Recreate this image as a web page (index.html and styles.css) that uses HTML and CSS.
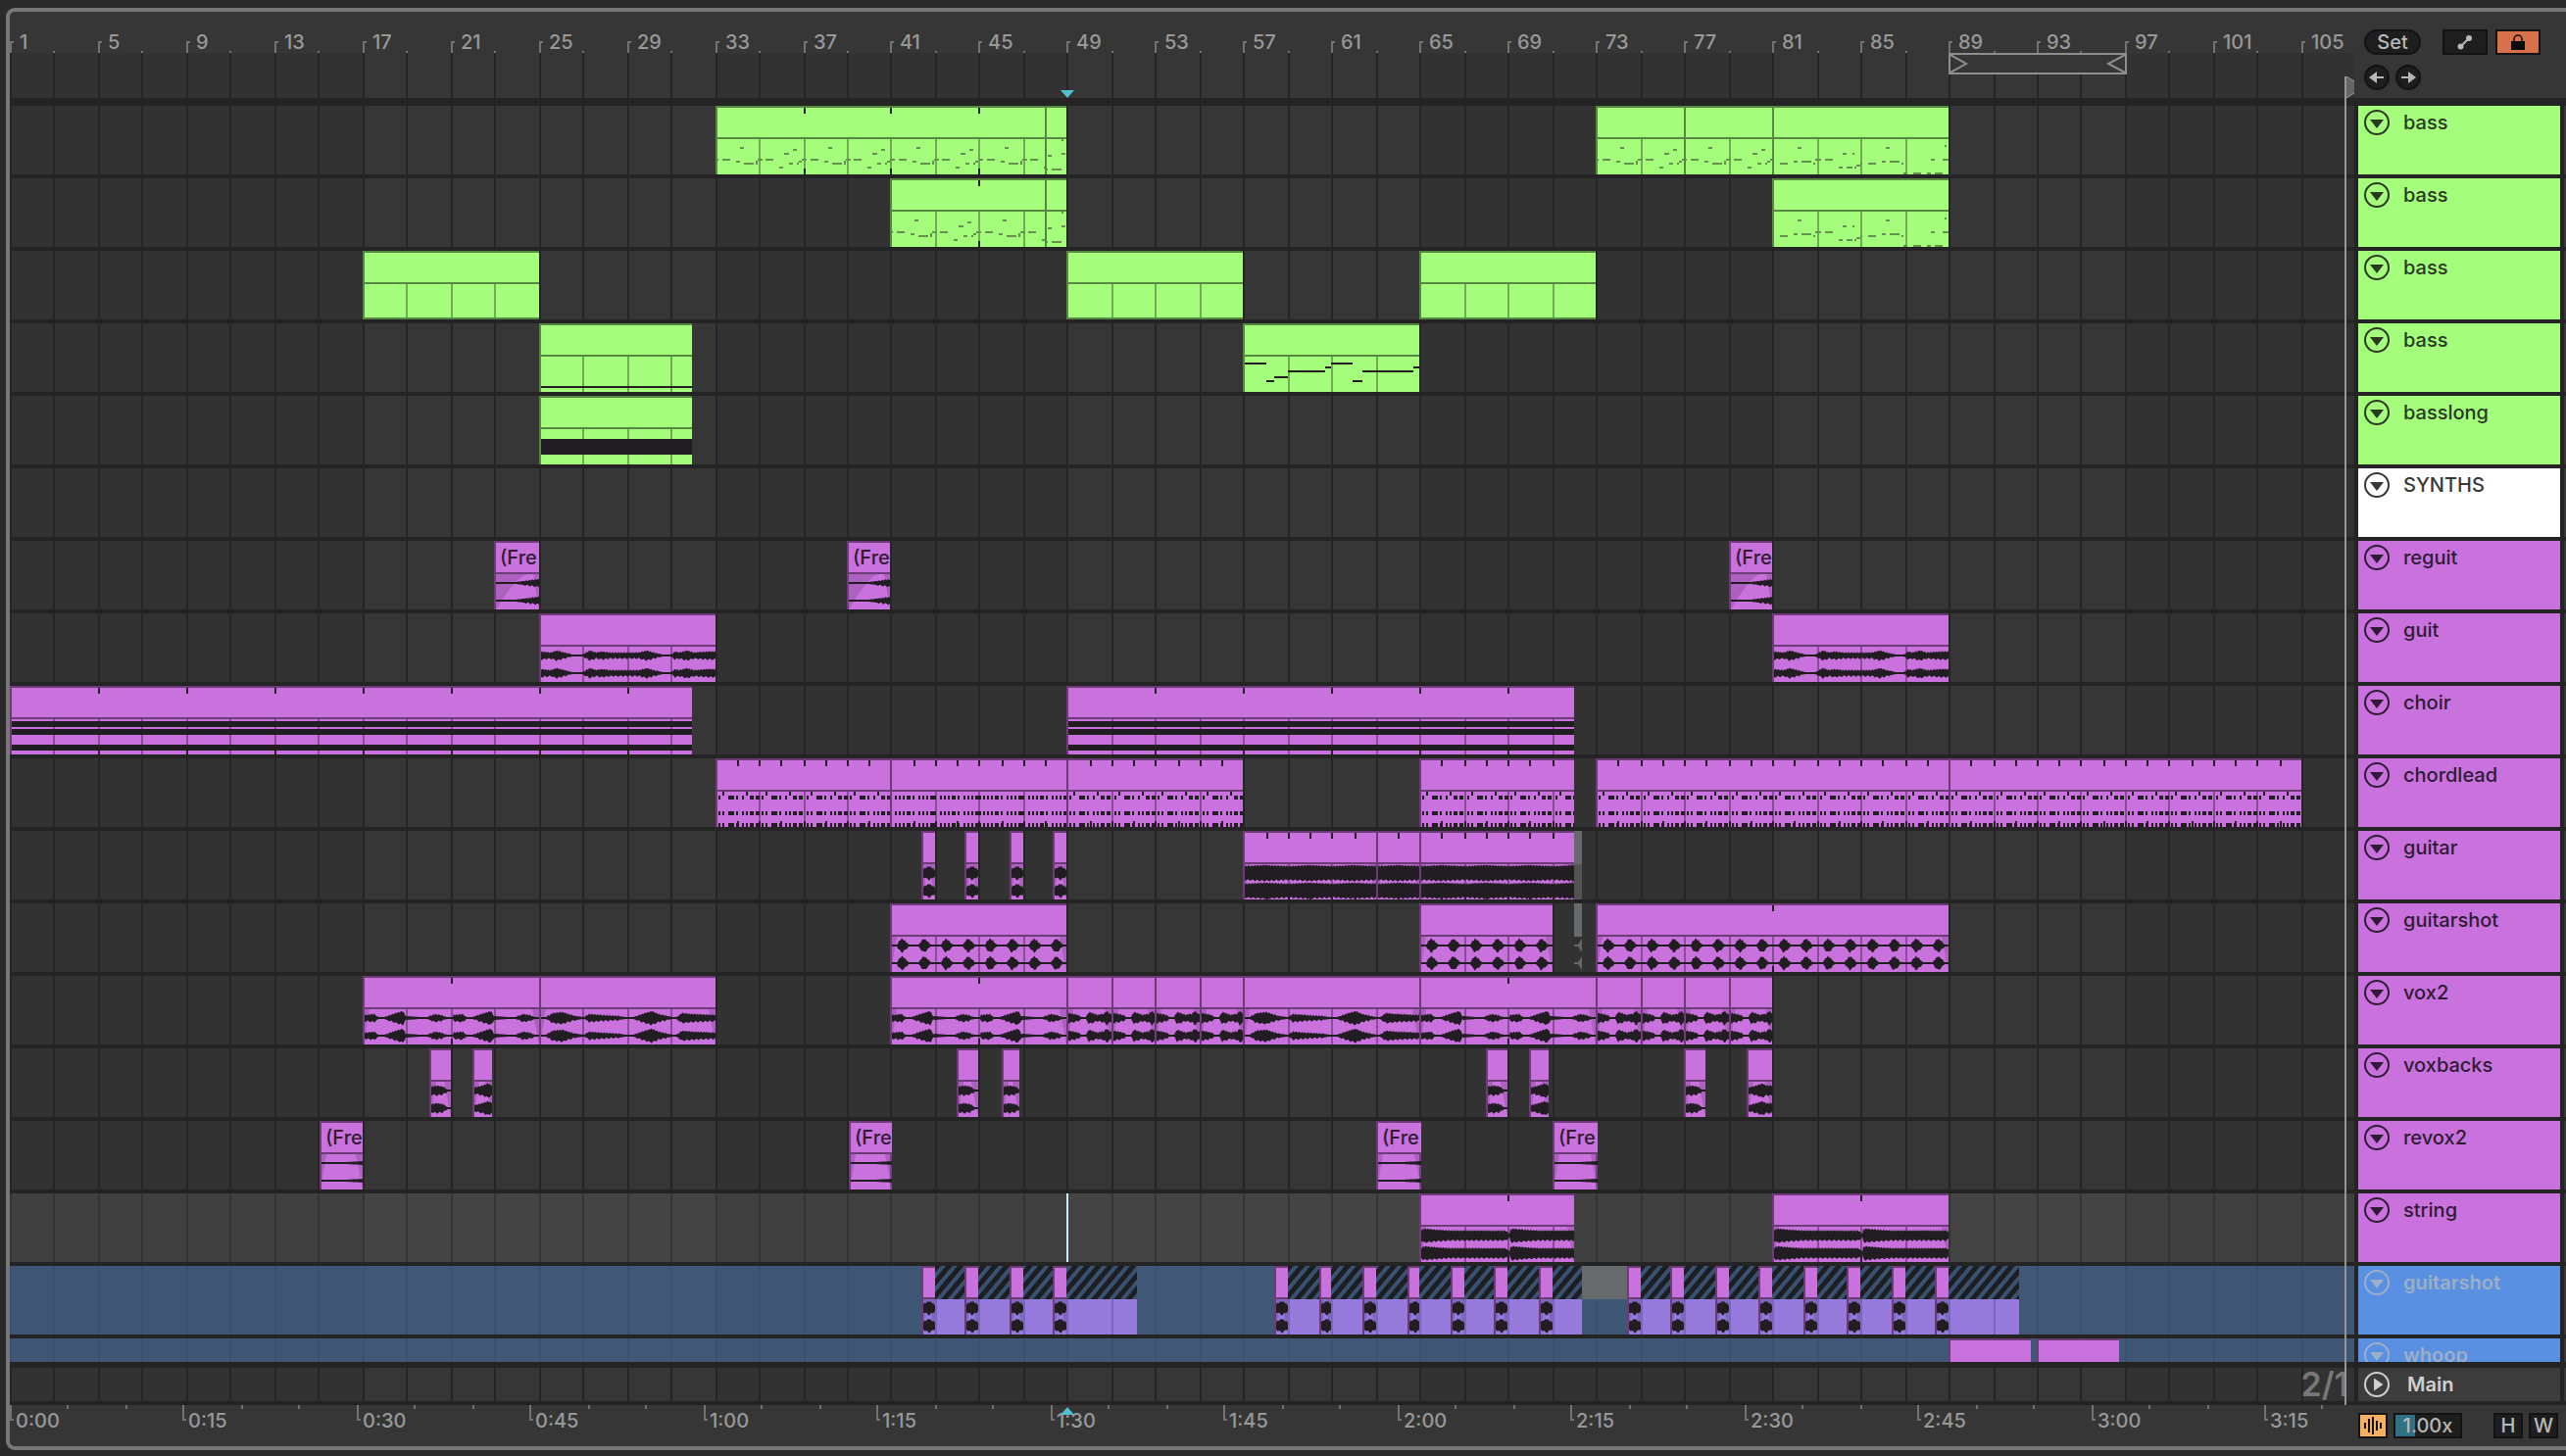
FILE: index.html
```html
<!DOCTYPE html>
<html lang="en">
<head>
    <meta charset="UTF-8">
    <meta name="viewport" content="width=device-width, initial-scale=1.0">
    <title>Arrangement</title>
    <link rel="stylesheet" href="styles.css">
</head>
<body>
    <main class="arrangement">
        <svg class="grid" id="grid"></svg>

        <header class="row top">
            <div class="timeline ruler">
                <div class="bar-labels" id="bars"></div>
                <div class="scrub" id="scrub"></div>
            </div>
            <div class="tools">
                <div class="tool-line">
                    <button class="pill">Set</button>
                    <button class="box wide" aria-label="Automation mode">
                        <svg width="16" height="16" viewBox="0 0 16 16"><path d="M3 13L13 3" stroke="#b8b8b8" stroke-width="2"/><circle cx="3.500" cy="12.500" r="3" fill="#b8b8b8"/><circle cx="12" cy="4" r="3" fill="#b8b8b8"/></svg>
                    </button>
                    <button class="box wide lock" aria-label="Lock envelopes">
                        <svg width="16" height="16" viewBox="0 0 16 16"><path d="M4 8V5a4 4 0 0 1 8 0v3" fill="none" stroke="#0c0c0c" stroke-width="1.500"/><path d="M1 7h14v9H1z" fill="#0c0c0c"/></svg>
                    </button>
                </div>
                <div class="tool-line arrows">
                    <button class="round" aria-label="Previous locator">
                        <svg width="16" height="14" viewBox="0 0 16 14"><path d="M0 7l8-6v5h7v2H8v5z" fill="#b8b8b8"/></svg>
                    </button>
                    <button class="round" aria-label="Next locator">
                        <svg width="16" height="14" viewBox="0 0 16 14"><path d="M16 7L8 1v5H1v2h7v5z" fill="#b8b8b8"/></svg>
                    </button>
                </div>
            </div>
        </header>

        <div class="divider"></div>
        <section class="tracks" id="tracks"></section>

        <div class="row main-row">
            <div class="timeline"><span class="zoom">2/1</span></div>
            <div class="track-head main-head">
                <button class="fold" aria-label="Unfold Main">
                    <svg width="26" height="26" viewBox="0 0 26 26"><circle cx="13" cy="13" r="12" fill="none" stroke="currentColor" stroke-width="2"/><path d="M10 6.500v13l9.500-6.500z" fill="currentColor"/></svg>
                </button>
                <span>Main</span>
            </div>
            <div class="edge"></div>
        </div>

        <footer class="row bottom">
            <div class="timeline" id="times"></div>
            <div class="status">
                <button class="box small wave" aria-label="Waveform zoom">
                    <svg width="20" height="18" viewBox="0 0 20 18"><path d="M2 6v6M6 2v14M10 0v18M14 4v10M18 6v6" stroke="#111" stroke-width="2"/></svg>
                </button>
                <input class="speed" type="text" value="1.00x" aria-label="Zoom factor">
                <button class="box small height">H</button>
                <button class="box small">W</button>
            </div>
        </footer>

        <div class="overlay" id="overlay"></div>
    </main>
    <script src="script.js"></script>
</body>
</html>
```
FILE: styles.css
```css
* {
    box-sizing: border-box;
}
body {
    margin: 0;
    height: 100vh;
    padding: 8px 0 6px 6px;
    background: #2a2a2a;
    font-family: Inter, "Liberation Sans", sans-serif;
    font-size: 20px;
    font-weight: 500;
    line-height: 26px;
    color: #989898;
    overflow: hidden;
}
button, input {
    font: inherit;
    padding: 0;
}
svg {
    display: block;
}
.arrangement {
    position: relative;
    height: 100%;
    display: flex;
    flex-direction: column;
    border: 4px solid #777;
    border-right: 0;
    border-radius: 9px 0 0 9px;
    background: #363636;
    overflow: hidden;
}
.row {
    display: flex;
    flex: none;
    position: relative;
}
.timeline {
    flex: 1;
    min-width: 0;
    position: relative;
}
.grid {
    position: absolute;
    left: 0;
    top: 42px;
    width: calc(100% - 216px);
    height: calc(100% - 84px);
}
.shade {
    fill: #323232;
}
.gridline {
    fill: #252525;
}

/* top ruler */
.top {
    height: 88px;
}
.ruler {
    display: flex;
    flex-direction: column;
}
.bar-labels {
    height: 42px;
    position: relative;
    overflow: hidden;
}
.scrub {
    flex: 1;
    position: relative;
}
.label {
    position: absolute;
    bottom: 0;
    height: 12px;
    padding-left: 8px;
    border-left: 2px solid #727272;
    line-height: 2px;
}
.label::before {
    content: "";
    position: absolute;
    left: 0;
    top: 0;
    width: 2px;
    height: 2px;
    background: #727272;
}
.tick {
    position: absolute;
    bottom: 0;
    width: 2px;
    height: 2px;
    background: #727272;
}
.loop {
    position: absolute;
    top: 0;
    height: 22px;
    border: 2px solid #8e8e8e;
    background: #363636;
    display: flex;
    justify-content: space-between;
}
.tools {
    width: 216px;
    padding: 18px 0 0 10px;
}
.tool-line {
    display: flex;
    gap: 8px;
}
.arrows {
    margin-top: 10px;
    gap: 6px;
}
.pill, .round, .box, .speed {
    height: 26px;
    border: 2px solid #131313;
    background: #1e1e1e;
    color: #b8b8b8;
    display: flex;
    align-items: center;
    justify-content: center;
    line-height: 22px;
}
.pill {
    width: 58px;
    border-radius: 13px;
    margin-right: 14px;
}
.round {
    width: 26px;
    border-radius: 50%;
}
.wide {
    width: 46px;
}
.lock {
    background: #d8714b;
}
.divider {
    flex: none;
    height: 8px;
    background: #242424;
    position: relative;
}

/* tracks */
.tracks {
    flex: 1;
    min-height: 0;
    overflow: hidden;
    position: relative;
}
.track {
    height: 74px;
    border-bottom: 4px solid #242424;
}
.track-head {
    width: 214px;
    display: flex;
    align-items: flex-start;
    gap: 14px;
    padding: 4px 6px;
    border: solid #242424;
    border-width: 0 4px;
    color: #2a3a22;
    line-height: 27px;
}
.edge {
    width: 2px;
    background: #363636;
}
.fold {
    width: 26px;
    height: 26px;
    border: 0;
    background: none;
    color: inherit;
}
.green .track-head {
    background: #a5fd7c;
}
.white .track-head {
    background: #fff;
    color: #383838;
}
.pink .track-head {
    background: #c972de;
    color: #2f1b36;
}
.blue .track-head {
    background: #5990e2;
    color: #9caec8;
    font-weight: 600;
}
.selected .timeline {
    background: rgba(255, 255, 255, 0.07);
}
.blue .timeline {
    background: rgba(70, 106, 155, 0.64);
}

/* clips */
.clip {
    position: absolute;
    top: 0;
    bottom: 0;
    overflow: hidden;
}
.clip svg {
    width: 100%;
    height: 70px;
}
.clip-name {
    position: absolute;
    left: 6px;
    top: 4px;
    color: #2f1b36;
}
.face {
    fill: #c972de;
}
.line {
    fill: #6d3c78;
}
.green .face {
    fill: #a5fd7c;
}
.green .line {
    fill: #578842;
}
.blue .body {
    fill: #967bdc;
}
.inner {
    fill: #000;
    opacity: 0.32;
}
.ink {
    fill: #221d23;
}
.note {
    fill: #659150;
}
.fade {
    fill: #000;
    opacity: 0.15;
}
.hatch {
    position: absolute;
    top: 0;
    bottom: 0;
    background: #967bdc;
}
.hatch::before {
    content: "";
    display: block;
    height: 34px;
    background: repeating-linear-gradient(130deg, #1c1e21 0, #1c1e21 4px, #3a5271 5px, #3a5271 8px, #1c1e21 9px);
}
.hatch-line {
    position: absolute;
    top: 34px;
    bottom: 0;
    width: 2px;
    background: #7867bc;
}
.stub {
    position: absolute;
    top: 0;
    height: 34px;
    background: #666a6d;
}
.stub-tail {
    position: absolute;
    top: 34px;
    bottom: 0;
    background: #535353;
}
.stub-tail.shot {
    background: none;
}
.stub-tail path {
    fill: #666;
}

/* main track and time ruler */
.main-row {
    height: 44px;
    border: solid #242424;
    border-width: 6px 0 4px;
}
.main-head {
    background: #3c3c3c;
    color: #d0d0d0;
    font-weight: 600;
    gap: 18px;
}
.zoom {
    position: absolute;
    right: 6px;
    top: 0;
    font-size: 34px;
    font-weight: 600;
    line-height: 34px;
    color: #777;
}
.bottom {
    height: 42px;
}
.time {
    position: absolute;
    top: 0;
    height: 16px;
    padding-left: 4px;
    border-left: 2px solid #727272;
    line-height: 32px;
}
.time::before {
    content: "";
    position: absolute;
    left: 0;
    bottom: 0;
    width: 2px;
    height: 2px;
    background: #727272;
}
.time-tick {
    position: absolute;
    top: 0;
    width: 2px;
    height: 4px;
    background: #727272;
}
.status {
    width: 216px;
    padding: 8px 8px 0 4px;
    display: flex;
    gap: 6px;
}
.small {
    width: 30px;
}
.wave {
    background: #f7b062;
}
.speed {
    width: 70px;
    text-align: center;
    background: linear-gradient(90deg, #2f7183 20px, #1e1e1e 20px);
}
.height {
    margin-left: auto;
}

/* markers over the timeline */
.overlay {
    position: absolute;
    inset: 0 216px 0 0;
    pointer-events: none;
}
.song-end {
    position: absolute;
    top: 66px;
    bottom: 42px;
    width: 10px;
    border-left: 2px solid #959595;
}
.insert-top, .insert-bottom {
    position: absolute;
    width: 14px;
    height: 8px;
    background: #55bdd3;
}
.insert-top {
    top: 80px;
    clip-path: polygon(0 0, 100% 0, 50% 100%);
}
.insert-bottom {
    bottom: 32px;
    clip-path: polygon(50% 0, 100% 100%, 0 100%);
}
.caret {
    position: absolute;
    top: 0;
    bottom: 0;
    width: 2px;
    background: #c4eef2;
}
```
FILE: script.js
```js
const BARS = 106.4;      // bars that fit in the view
const SECONDS = 202.8;   // the same span in seconds
const BODY = 34;         // top of the clip content

// notes: [x, y, width, height]
const riff = [[0,54,3],[7,54,8],[25,42,4],[21,56,4],[29,58,10],[41,56,2,4],[43,54,5],[51,54,8],[70,48,5],
    [79,44,4],[65,62,4],[75,58,4],[83,58,2],[85,56,3],[88,54,2]];
const riffLow = [[0,58,2],[8,58,8],[26,42,4],[22,56,4],[30,56,10],[42,58,2],[44,54,6],[54,54,8],[72,48,4],[82,48,2],
    [68,62,4],[76,62,6],[84,62,2],[86,60,4],[90,58,2],[98,58,8],[116,42,4],[112,56,4],[120,56,10],[132,58,2],
    [134,68,4],[144,68,8],[158,68,4],[166,68,8],[162,54,4],[174,54,6],[176,40,2]];
const riffEnd = [[0,64,3],[7,64,10],[3,50,4],[17,48,4],[17,34,2]];
const melody = [[2,40,22],[24,58,8],[32,54,14],[46,48,38],[84,44,6],[90,40,22],[112,58,10],[122,48,52],[174,44,6]];
const stabs = [3,2, 7,2, 13,6, 21,2, 27,2, 31,2, 35,4, 41,4];
const stabs2 = [5,2, 9,2, 13,2, 17,4, 23,2, 29,2, 33,2, 37,2, 41,6];

// amplitude envelopes: period in px, then [x, amplitude] points
const env = {
    guit: [180, [0,4],[10,3],[16,5],[24,3],[32,1],[42,1],[46,3],[50,5],[56,3],[62,4],[70,3],[90,3],[100,3],[108,5],[115,3],[124,1],[132,1],[137,4],[141,3],[149,5],[156,3],[170,4],[180,4]],
    shot: [22.48, [0,1],[5,1],[7,4],[10,7],[13,5],[17,1],[22.48,1]],
    voxA: [90, [0,3],[10,4],[14,1],[20,1],[32,5],[39,7],[42,2],[57,1],[64,1],[72,4],[78,3],[84,1],[90,1]],
    voxB: [180, [0,1],[5,1],[12,5],[22,6],[28,4],[35,2],[44,1],[49,4],[62,3],[80,2],[86,1],[94,1],[106,5],[113,7],[120,4],[134,1],[138,1],[144,5],[155,4],[180,3]],
    voxC: [45, [0,5],[6,4],[10,3],[13,1],[18,1],[21,6],[30,3],[33,4],[36,4],[39,7],[43,4],[45,3]],
    string: [90, [0,5],[3,7],[14,6],[30,5],[86,5],[90,2]],
    blob: [60, [0,4],[6,7],[14,2],[60,2]],
    back: [60, [0,4],[6,5],[12,4],[17,1],[60,1]],
    back2: [60, [0,3],[8,5],[14,7],[18,5],[60,5]],
    rev: [60, [0,1],[20,1],[36,3],[45,4],[60,4]],
    thin: [60, [0,1],[24,1],[45,2],[60,2]],
    full: [45, [0,7],[20,8],[45,7]]
};

// clips: [start bar, end bar, content, tick spacing in bars]
const small = n => Array.from({length: n}, (_, i) => i * 2);
const tracks = [
    {name: 'bass', color: 'green', clips: [[33,48,'riff',4],[48,49,'riffEnd'],[73,77,'riff'],[77,81,'riff'],[81,89,'riffLow']]},
    {name: 'bass', color: 'green', clips: [[41,48,'riff',4],[48,49,'riffEnd'],[81,89,'riffLow']]},
    {name: 'bass', color: 'green', clips: [[17,25,'empty'],[49,57,'empty'],[65,73,'empty']]},
    {name: 'bass', color: 'green', clips: [[25,32,'pedal'],[57,65,'melody']]},
    {name: 'basslong', color: 'green', clips: [[25,32,'block']]},
    {name: 'SYNTHS', color: 'white', clips: []},
    {name: 'reguit', color: 'pink', clips: [[23,25,'rev'],[39,41,'rev'],[79,81,'rev']]},
    {name: 'guit', color: 'pink', clips: [[25,33,'guit'],[81,89,'guit']]},
    {name: 'choir', color: 'pink', clips: [[1,32,'choir',4],[49,72,'choir',4]]},
    {name: 'chordlead', color: 'pink', clips: [[33,41,'stabs',1],[41,49,'stabs2',1],[49,57,'stabs',1],[65,72,'stabs',1],[73,89,'stabs',1],[89,105,'stabs',1]]},
    {name: 'guitar', color: 'pink', stubs: [[72,72.4]], clips: [...small(4).map(i => [42.35 + i, 43 + i, 'blob']), [57,63,'full',1],[63,65,'full',1],[65,72,'full',1]]},
    {name: 'guitarshot', color: 'pink', stubs: [[72,72.4]], clips: [[41,49,'shot'],[65,71,'shot'],[73,89,'shot',8]]},
    {name: 'vox2', color: 'pink', clips: [[17,25,'voxA',4],[25,33,'voxB'],[41,49,'voxA',4],[49,51,'voxC'],[51,53,'voxC'],[53,55,'voxC'],[55,57,'voxC'],
        [57,65,'voxB'],[65,73,'voxA',4],[73,75,'voxC'],[75,77,'voxC'],[77,79,'voxC'],[79,81,'voxC']]},
    {name: 'voxbacks', color: 'pink', clips: [[20.05,21,'back'],[22,22.9,'back2'],[44,45,'back'],[46.05,46.8,'back'],[68,69,'back'],[70,70.85,'back2'],[77,78,'back'],[79.85,81,'back2']]},
    {name: 'revox2', color: 'pink', clips: [[15.1,17,'thin'],[39.1,41.05,'thin'],[63,65.05,'thin'],[71,73.05,'thin']]},
    {name: 'string', color: 'pink', selected: true, clips: [[65,72,'string',4],[81,89,'string',4]]},
    {name: 'guitarshot', color: 'blue',
        hatches: [[43,52.2],[59,72.35],[75,92.2]],
        stubs: [[72.35,74.4]],
        clips: [...small(4).map(i => [42.35 + i, 43 + i, 'blob']), ...small(7).map(i => [58.4 + i, 59 + i, 'blob']), ...small(8).map(i => [74.4 + i, 75 + i, 'blob'])]},
    {name: 'whoop', color: 'blue', clips: [[89,92.7,'none'],[93,96.7,'none']]}
];

let unit = 22.48;
const x = bar => 2 * Math.floor(0.35 + (bar - 1) * unit / 2);
const rect = (cls, left, top, w, h) => `<rect class="${cls}" x="${left}" y="${top}" width="${w}" height="${h}"/>`;
const place = (left, right) => `style="left:${left}px;width:${right - left}px"`;

function amplitude(name, px) {
    const [period, ...points] = env[name];
    const t = px % period;
    const i = Math.max(1, points.findIndex(p => p[0] >= t));
    const [x0, a0] = points[i - 1];
    const [x1, a1] = points[i];
    return a0 + (a1 - a0) * (t - x0) / (x1 - x0);
}

function waveform(name, width) {
    const scale = unit / 22.48;
    let out = '';
    for (const mid of [43, 61]) {
        let upper = '', lower = '';
        for (let px = 0; px <= width; px += 1) {
            const a = amplitude(name, px / scale);
            const jitter = a > 2 ? Math.sin(px * 2.1 + mid) * 0.8 : 0;
            const low = a > 2 ? Math.cos(px * 1.3 + mid) * 0.8 : 0;
            upper += `L${px + 2} ${(mid - a - jitter).toFixed(1)}`;
            lower = `L${px + 2} ${(mid + a + low).toFixed(1)}` + lower;
        }
        out += `<path class="ink" d="M2 ${mid}${upper}${lower}Z"/>`;
    }
    return out;
}

function content(kind, start, end) {
    const left = x(start), w = x(end) - left;
    const scale = unit / 22.48;
    const notes = (list, cls, period) => {
        let out = '';
        for (let p = 0; p < w; p += period * scale)
            for (const n of list) out += rect(cls, Math.round(p + n[0] * scale), n[1], n[2], n[3] || 2);
        return out;
    };
    if (kind === 'riff') return notes(riff, 'note', 89.92);
    if (kind === 'riffLow') return notes(riffLow, 'note', 999);
    if (kind === 'riffEnd') return notes(riffEnd, 'note', 999);
    if (kind === 'melody') return notes(melody, 'ink', 999);
    if (kind === 'empty') return rect('line', 0, 68, w, 2);
    if (kind === 'pedal') return rect('ink', 2, 64, w, 2);
    if (kind === 'block') return rect('ink', 2, 44, w, 16);
    if (kind === 'choir') return [36, 44, 60].map(y => rect('ink', 2, y, w, 6)).join('');
    if (kind.startsWith('stabs')) {
        const list = kind === 'stabs' ? stabs : stabs2;
        let out = '';
        for (let bar = start; bar < end; bar += 2) {
            const p = x(bar) - left;
            for (let i = 0; i < list.length; i += 2) {
                const high = kind === 'stabs' && (i === 2 || i === 10);
                out += rect('ink', p + list[i], high ? 34 : 38, list[i + 1], 4);
                out += rect('ink', p + list[i], 54, list[i + 1], 4) + rect('ink', p + list[i], 66, list[i + 1], 4);
            }
        }
        return out;
    }
    if (!env[kind]) return '';
    let fades = '';
    if (kind === 'rev') fades = `<path class="fade" d="M2 34H${w - 12}Q${w / 2} 36 2 70ZM${w} 34H${w - 6}L${w} 70Z"/>`;
    else if (kind !== 'guit') fades = `<path class="fade" d="M2 34h5L2 64zM${w} 34h-7L${w} 70z"/>`;
    return fades + waveform(kind, w);
}

function drawClip([start, end, kind, step]) {
    const left = x(start), w = x(end) - left;
    let svg = rect('face', 0, 0, w, BODY) + rect('face body', 0, BODY, w, 36);
    for (let bar = Math.ceil(start); bar < end; bar++)
        if (bar % 2 === 1 && bar > start) svg += rect('inner', x(bar) - left, BODY, 2, 36);
    svg += content(kind, start, end);
    if (step)
        for (let bar = start + step; bar < end; bar += step)
            svg += rect('ink', x(bar) - left, 2, 2, 6) + rect('ink', x(bar) - left, 64, 2, 6);
    svg += rect('line', 0, 0, w, 2) + rect('line', 0, 32, w, 2) + rect('line', 0, 0, 2, 70);
    const name = kind === 'rev' || kind === 'thin' ? '<span class="clip-name">(Fre</span>' : '';
    return `<div class="clip" ${place(left, left + w)}><svg>${svg}</svg>${name}</div>`;
}

function drawHatch([start, end]) {
    const left = x(start);
    let lines = '';
    for (let bar = start; bar < end; bar += 2)
        lines += `<i class="hatch-line" style="left:${x(bar) - left}px"></i>`;
    return `<div class="hatch" ${place(left, x(end))}>${lines}</div>`;
}

function drawStub([start, end], track) {
    const pos = place(x(start), x(end));
    let tail = '';
    if (track.name === 'guitar') tail = `<div class="stub-tail" ${pos}></div>`;
    else if (track.color === 'pink') tail = `<div class="stub-tail shot" ${pos}><svg width="8" height="36"><path d="M0 8h4l4-6v14l-4-6H0zM0 26h4l4-6v14l-4-6H0z"/></svg></div>`;
    return `<div class="stub" ${pos}></div>${tail}`;
}

function drawTrack(track) {
    const lane = (track.hatches || []).map(drawHatch).join('')
        + (track.stubs || []).map(s => drawStub(s, track)).join('')
        + track.clips.map(drawClip).join('')
        + (track.selected ? `<div class="caret" style="left:${x(49)}px"></div>` : '');
    return `<div class="row track ${track.color}${track.selected ? ' selected' : ''}">
        <div class="timeline">${lane}</div>
        <div class="track-head">
            <button class="fold" aria-label="Fold ${track.name}"><svg width="26" height="26" viewBox="0 0 26 26"><circle cx="13" cy="13" r="12" fill="none" stroke="currentColor" stroke-width="2"/><path d="M6 10h14l-7 9z" fill="currentColor"/></svg></button>
            <span>${track.name}</span>
        </div>
        <div class="edge"></div>
    </div>`;
}

function render() {
    const width = document.getElementById('times').clientWidth;
    unit = width / BARS;

    let grid = '', labels = '', times = '';
    for (let bar = 1; bar < BARS; bar += 32) grid += rect('shade', x(bar), 0, Math.min(x(bar + 16), width) - x(bar), '100%');
    for (let bar = 1; bar < BARS; bar += 2) {
        grid += rect('gridline', x(bar), 0, 2, '100%');
        labels += bar % 4 === 1
            ? `<span class="label" style="left:${x(bar)}px">${bar}</span>`
            : `<i class="tick" style="left:${x(bar)}px"></i>`;
    }
    for (let s = 0; s < SECONDS; s += 5) {
        const left = 2 * Math.round(s * width / SECONDS / 2);
        times += s % 15 === 0
            ? `<span class="time" style="left:${left}px">${Math.floor(s / 60)}:${String(s % 60).padStart(2, '0')}</span>`
            : `<i class="time-tick" style="left:${left}px"></i>`;
    }
    document.getElementById('grid').innerHTML = grid;
    document.getElementById('bars').innerHTML = labels;
    document.getElementById('times').innerHTML = times;
    document.getElementById('scrub').innerHTML = `<div class="loop" ${place(x(89), x(97) + 2)}>
        <svg width="20" height="18" fill="none" stroke="#8e8e8e" stroke-width="2"><path d="M0 0L16 9L0 18"/></svg>
        <svg width="20" height="18" fill="none" stroke="#8e8e8e" stroke-width="2"><path d="M20 0L3 9L20 18"/></svg>
    </div>`;
    document.getElementById('tracks').innerHTML = tracks.map(drawTrack).join('');
    document.getElementById('overlay').innerHTML = `
        <div class="song-end" style="left:${x(107)}px"><svg width="8" height="22"><path d="M0 0L8 5V17L0 22Z" fill="#666"/><path d="M0 0L8 5M8 17L0 22" stroke="#959595" stroke-width="1"/></svg></div>
        <div class="insert-top" style="left:${x(49) - 6}px"></div>
        <div class="insert-bottom" style="left:${x(49) - 6}px"></div>`;
}

window.addEventListener('resize', render);
render();
```
